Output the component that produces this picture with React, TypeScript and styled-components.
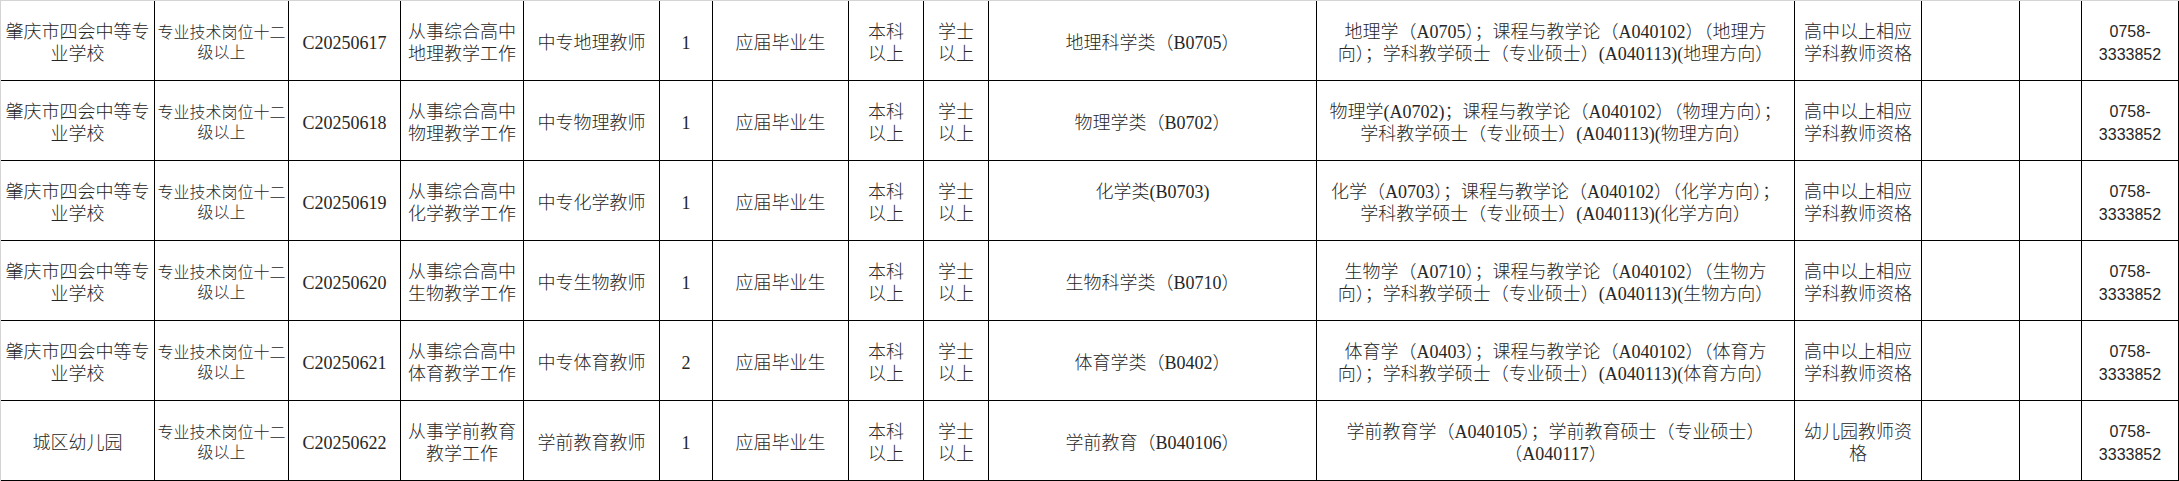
import React from 'react';
import styled, { createGlobalStyle } from 'styled-components';

type Kind = 'text' | 'narrow' | 'phone';

interface CellData {
  lines: string[];
  kind?: Kind;
}

const COLUMN_WIDTHS = [154, 134, 112, 123, 136, 53, 136, 75, 65, 328, 478, 127, 98, 62, 97];

const school = (name: string[]): CellData => ({ lines: name });
const level: CellData = { lines: ['专业技术岗位十二', '级以上'], kind: 'narrow' };
const phone: CellData = { lines: ['0758-', '3333852'], kind: 'phone' };
const empty: CellData = { lines: [] };
const bachelor: CellData = { lines: ['本科', '以上'] };
const degree: CellData = { lines: ['学士', '以上'] };
const fresh: CellData = { lines: ['应届毕业生'] };
const highSchoolCert: CellData = { lines: ['高中以上相应', '学科教师资格'] };

const SCHOOL_SZ = school(['肇庆市四会中等专', '业学校']);

const rows: CellData[][] = [
  [
    SCHOOL_SZ,
    level,
    { lines: ['C20250617'] },
    { lines: ['从事综合高中', '地理教学工作'] },
    { lines: ['中专地理教师'] },
    { lines: ['1'] },
    fresh,
    bachelor,
    degree,
    { lines: ['地理科学类（B0705）'] },
    {
      lines: [
        '地理学（A0705）；课程与教学论（A040102）（地理方',
        '向）；学科教学硕士（专业硕士）(A040113)(地理方向）',
      ],
    },
    highSchoolCert,
    empty,
    empty,
    phone,
  ],
  [
    SCHOOL_SZ,
    level,
    { lines: ['C20250618'] },
    { lines: ['从事综合高中', '物理教学工作'] },
    { lines: ['中专物理教师'] },
    { lines: ['1'] },
    fresh,
    bachelor,
    degree,
    { lines: ['物理学类（B0702）'] },
    {
      lines: [
        '物理学(A0702)；课程与教学论（A040102）（物理方向）；',
        '学科教学硕士（专业硕士）(A040113)(物理方向）',
      ],
    },
    highSchoolCert,
    empty,
    empty,
    phone,
  ],
  [
    SCHOOL_SZ,
    level,
    { lines: ['C20250619'] },
    { lines: ['从事综合高中', '化学教学工作'] },
    { lines: ['中专化学教师'] },
    { lines: ['1'] },
    fresh,
    bachelor,
    degree,
    { lines: ['化学类(B0703)', '\u00a0'] },
    {
      lines: [
        '化学（A0703）；课程与教学论（A040102）（化学方向）；',
        '学科教学硕士（专业硕士）(A040113)(化学方向）',
      ],
    },
    highSchoolCert,
    empty,
    empty,
    phone,
  ],
  [
    SCHOOL_SZ,
    level,
    { lines: ['C20250620'] },
    { lines: ['从事综合高中', '生物教学工作'] },
    { lines: ['中专生物教师'] },
    { lines: ['1'] },
    fresh,
    bachelor,
    degree,
    { lines: ['生物科学类（B0710）'] },
    {
      lines: [
        '生物学（A0710）；课程与教学论（A040102）（生物方',
        '向）；学科教学硕士（专业硕士）(A040113)(生物方向）',
      ],
    },
    highSchoolCert,
    empty,
    empty,
    phone,
  ],
  [
    SCHOOL_SZ,
    level,
    { lines: ['C20250621'] },
    { lines: ['从事综合高中', '体育教学工作'] },
    { lines: ['中专体育教师'] },
    { lines: ['2'] },
    fresh,
    bachelor,
    degree,
    { lines: ['体育学类（B0402）'] },
    {
      lines: [
        '体育学（A0403）；课程与教学论（A040102）（体育方',
        '向）；学科教学硕士（专业硕士）(A040113)(体育方向）',
      ],
    },
    highSchoolCert,
    empty,
    empty,
    phone,
  ],
  [
    school(['城区幼儿园']),
    level,
    { lines: ['C20250622'] },
    { lines: ['从事学前教育', '教学工作'] },
    { lines: ['学前教育教师'] },
    { lines: ['1'] },
    fresh,
    bachelor,
    degree,
    { lines: ['学前教育（B040106）'] },
    { lines: ['学前教育学（A040105）；学前教育硕士（专业硕士）', '（A040117）'] },
    { lines: ['幼儿园教师资', '格'] },
    empty,
    empty,
    phone,
  ],
];

const App: React.FC = () => {
  return (
    <>
      <GlobalStyle />
      <Sheet $columns={COLUMN_WIDTHS}>
        {rows.map((row, r) =>
          row.map((cell, c) => (
            <Cell key={`${r}-${c}`} $kind={cell.kind ?? 'text'}>
              <CellText>
                {cell.lines.map((line, i) => (
                  <Line key={i}>{line}</Line>
                ))}
              </CellText>
            </Cell>
          ))
        )}
      </Sheet>
    </>
  );
};

export default App;

const GlobalStyle = createGlobalStyle`
  html, body {
    margin: 0;
    padding: 0;
    background: #ffffff;
  }
  body {
    font-family: 'Liberation Serif', 'Noto Sans CJK SC', serif;
  }
`;

const Sheet = styled.div<{ $columns: number[] }>`
  display: grid;
  grid-template-columns: ${(p) => p.$columns.map((w) => `${w}px`).join(' ')};
  grid-auto-rows: 80px;
  width: max-content;
  border-top: 1px solid #d4d4d4;
  border-left: 1px solid #d4d4d4;
`;

const Cell = styled.div<{ $kind: Kind }>`
  box-sizing: border-box;
  display: flex;
  align-items: center;
  justify-content: center;
  padding-top: 4px;
  border-right: 1px solid #000000;
  border-bottom: 1px solid #000000;
  overflow: hidden;
  color: #262626;
  text-align: center;
  font-family: ${(p) =>
    p.$kind === 'phone'
      ? `'Liberation Sans', 'Noto Sans CJK SC', sans-serif`
      : `'Liberation Serif', 'Noto Sans CJK SC', serif`};
  font-weight: 300;
  font-size: ${(p) => (p.$kind === 'narrow' ? '16px' : p.$kind === 'phone' ? '16px' : '18px')};
  line-height: ${(p) => (p.$kind === 'narrow' ? '20px' : p.$kind === 'phone' ? '23px' : '22px')};
`;

const CellText = styled.div`
  display: flex;
  flex-direction: column;
  align-items: center;
`;

const Line = styled.span`
  display: block;
  white-space: nowrap;
`;
